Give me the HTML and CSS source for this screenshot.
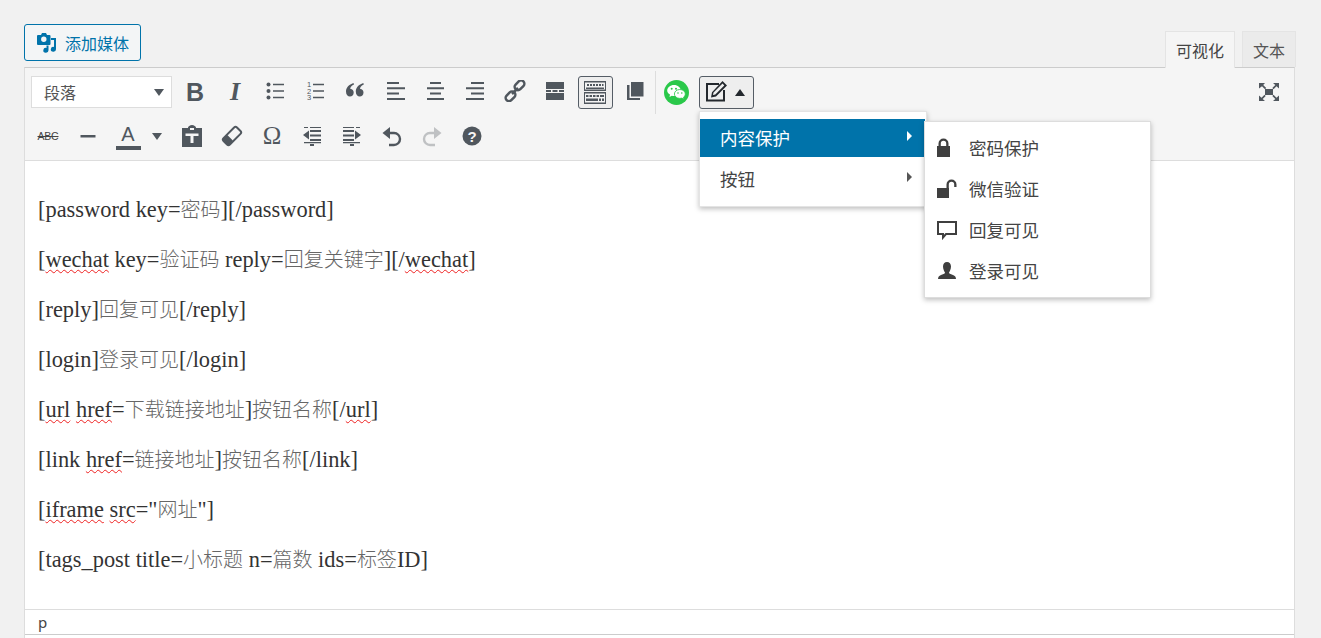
FILE: index.html
```html
<!DOCTYPE html>
<html lang="zh-CN">
<head>
<meta charset="utf-8">
<title>编辑器</title>
<link rel="stylesheet" href="styles.css">
</head>
<body>
<div class="page">
  <div class="top">
    <button class="media">
      <svg class="ic" width="20" height="20" viewBox="0 0 20 20"><path fill="#0073aa" fill-rule="evenodd" d="M1 2h3l1-2h4l1 2h2.500a1 1 0 0 1 1 1v8a1 1 0 0 1-1 1H1a1 1 0 0 1-1-1V3a1 1 0 0 1 1-1zm5.800 1.500a2.700 2.700 0 1 0 0 5.400 2.700 2.700 0 0 0 0-5.400z"/><path fill="#0073aa" d="M14 5h5v11.200a2.600 2.400 0 1 1-2-2.300V7h-3zM11.500 12.500v4.700a2.600 2.400 0 1 1-2-2.300v-2.400z"/></svg>
      <span>添加媒体</span>
    </button>
    <div class="tabs"><div class="tab on">可视化</div><div class="tab">文本</div></div>
  </div>
  <div class="editor">
    <div class="toolbar">
      <div class="row r1">
        <div class="select"><span>段落</span><i class="caret"></i></div>
        <div class="btns">
          <div class="b"><span class="tb">B</span></div>
          <div class="b"><span class="ti">I</span></div>
          <div class="b"><svg width="20" height="20" viewBox="0 0 20 20"><circle class="f" cx="3.500" cy="3.500" r="2"/><circle class="f" cx="3.500" cy="10" r="2"/><circle class="f" cx="3.500" cy="16.500" r="2"/><path class="f" d="M8 2.700h11v1.600H8zM8 9.200h11v1.600H8zM8 15.700h11v1.600H8z"/></svg></div>
          <div class="b"><svg width="20" height="20" viewBox="0 0 20 20"><path class="f" d="M8 2.700h11v1.600H8zM8 9.200h11v1.600H8zM8 15.700h11v1.600H8z"/><text class="num" x="4" y="6">1</text><text class="num" x="4" y="12.500">2</text><text class="num" x="4" y="19">3</text></svg></div>
          <div class="b"><svg width="22" height="20" viewBox="0 0 20 20"><path class="f" d="M9 3.500C6 4.800 5.300 6.500 5.300 8 7 7.800 8.700 9 8.700 11.500S7 15.500 5 15.500C2.800 15.500 1 14 1 10.500 1 6.500 4 3.500 8.500 2zM18.800 3.500c-3 1.300-3.700 3-3.700 4.500 1.700-.2 3.400 1 3.400 3.500s-1.700 4-3.700 4c-2.200 0-4-1.500-4-5 0-4 3-7 7.500-8.500z"/></svg></div>
          <div class="b"><svg width="20" height="20" viewBox="0 0 20 20"><path class="f" d="M2 1h12v2H2zM2 6.300h18v2H2zM2 11.600h12v2H2zM2 17h18v2H2z"/></svg></div>
          <div class="b"><svg width="20" height="20" viewBox="0 0 20 20"><path class="f" d="M5 1h11v2H5zM2 6.300h17v2H2zM5 11.600h11v2H5zM2 17h17v2H2z"/></svg></div>
          <div class="b"><svg width="20" height="20" viewBox="0 0 20 20"><path class="f" d="M6 1h13v2H6zM1 6.300h18v2H1zM6 11.600h13v2H6zM1 17h18v2H1z"/></svg></div>
          <div class="b"><svg width="22" height="22" viewBox="0 0 22 22"><g fill="none" stroke="#50575e" stroke-width="2.500"><rect x="10" y="2" width="11" height="6.600" rx="3.300" transform="rotate(-45 15.500 5.300)"/><rect x="1" y="13" width="11" height="6.600" rx="3.300" transform="rotate(-45 6.500 16.300)"/><path d="M8 14l6-6"/></g></svg></div>
          <div class="b"><svg width="20" height="20" viewBox="0 0 20 20"><path class="f" d="M1 1h18v7H1zM1 9h5v2H1zM7.500 9h5v2h-5zM14 9h5v2h-5zM1 12h18v7H1z"/></svg></div>
          <div class="b act"><svg width="24" height="23" viewBox="0 0 24 23"><path fill="#50575e" d="M1 0h22v10H1zM1 11h22v12H1z"/><path fill="#f3f3f3" d="M2 1.500h20v7H2zM2 12.500h20v9H2z"/><path fill="#50575e" d="M4 3h2v2H4zM7 3h2v2H7zM10 3h2v2h-2zM13 3h2v2h-2zM16 3h2v2h-2zM19 3h1.500v2H19zM3 6.500h18V8H3zM3 14h2.500v2H3zM6.500 14h2.500v2H6.500zM10 14h2.500v2H10zM13.500 14h2.500v2h-2.500zM17 14h4v2h-4zM3 17.500h12V20H3zM16 17.500h2V20h-2zM19 17.500h2V20h-2z"/></svg></div>
          <div class="b"><svg width="20" height="20" viewBox="0 0 20 20"><path class="f" d="M6 1h12.500v14.500H6z"/><path class="f" d="M2 4h2.500v13H15v2H2z"/></svg></div>
        </div>
        <div class="sep"></div>
        <div class="wechat"><svg width="25" height="25" viewBox="0 0 25 25"><circle cx="12.500" cy="12.500" r="12.500" fill="#2ac84a"/><path fill="#fff" d="M10 5c3.800 0 6.800 2.500 6.800 5.500S13.800 16 10 16c-.8 0-1.500-.1-2.200-.3L5.500 17l.5-2.400C4.200 13.500 3.200 12.100 3.200 10.500 3.200 7.500 6.200 5 10 5z"/><path fill="#fff" stroke="#2ac84a" stroke-width=".8" d="M15.800 9.500c3.200 0 5.500 2 5.500 4.500 0 1.300-.7 2.400-1.800 3.300l.4 1.900-1.900-1.100c-.7.2-1.400.3-2.200.3-3 0-5.400-2-5.400-4.400 0-2.500 2.400-4.500 5.400-4.500z"/><circle cx="7.700" cy="8.800" r="1" fill="#2ac84a"/><circle cx="12" cy="8.800" r="1" fill="#2ac84a"/><circle cx="14" cy="13" r=".8" fill="#2ac84a"/><circle cx="17.800" cy="13" r=".8" fill="#2ac84a"/></svg></div>
        <div class="drop">
          <svg width="21" height="21" viewBox="0 0 21 21"><path fill="none" stroke="#23282d" stroke-width="2" d="M13 3H1v16.500h17V9"/><path fill="#23282d" fill-rule="evenodd" d="M16.500 0L21 4.500 10 15.500l-5 1 1-5.300zM16.500 2.500l-9 9-.5 2.500 2.300-.5 9-9z"/></svg>
          <i class="up"></i>
        </div>
        <div class="full"><svg width="22" height="20" viewBox="0 0 22 20"><path class="f" d="M7 7h8v6H7zM1 1h6L5.200 3l3 3L7 7.300l-3-3L1 6.500zM21 1v5.500l-2.500-2.200-3 3L14.300 6l3-3L15 1zM1 19v-5.500l2.500 2.200 3-3L7.700 14l-3 3L7 19zM21 19h-6l2.300-2-3-3 1.200-1.300 3 3 2.500-2.200z"/></svg></div>
      </div>
      <div class="row r2">
        <div class="b"><span class="abc">ABC</span></div>
        <div class="b"><svg width="20" height="20" viewBox="0 0 20 20"><path class="f" d="M2.500 9h15v2.500h-15z"/></svg></div>
        <div class="color">
          <div class="b"><span class="fa">A</span></div>
          <i class="caret"></i>
        </div>
        <div class="b"><svg width="22" height="22" viewBox="0 0 22 22"><path class="f" fill-rule="evenodd" d="M1 3h6V2.500C7 1.500 9 0 11 0s4 1.500 4 2.500V3h6v19H1zM9 3v2h4V3zM4.500 8.500V11H9.500v7h3v-7h5V8.500z"/></svg></div>
        <div class="b"><svg width="22" height="22" viewBox="0 0 22 22"><g transform="rotate(-45 11 11)"><rect class="f" x="1.500" y="6.500" width="7" height="9" rx="1.500"/><rect fill="none" stroke="#50575e" stroke-width="2" x="1.500" y="6.500" width="19" height="9" rx="2"/></g></svg></div>
        <div class="b"><span class="om">Ω</span></div>
        <div class="b"><svg width="20" height="20" viewBox="0 0 20 20"><path class="f" d="M2 1h4v1H2zM8 1h11v1H8zM8 4h11v2H8zM8 8.500h11v2H8zM8 13h11v2H8zM2 16h17v1.200H2zM8 18h4v2H8zM7 4.500v9L1 9z"/></svg></div>
        <div class="b"><svg width="20" height="20" viewBox="0 0 20 20"><path class="f" d="M1 1h11v1H1zM14 1h4v1h-4zM1 4h11v2H1zM1 8.500h11v2H1zM1 13h11v2H1zM1 16h17v1.200H1zM8 18h4v2H8zM13 4.500v9l6-4.500z"/></svg></div>
        <div class="b"><svg width="22" height="22" viewBox="0 0 22 22"><path fill="none" stroke="#50575e" stroke-width="2.400" d="M4 8h9a6 6 0 0 1 0 12H8"/><path class="f" d="M9 2v12L1.500 8z"/></svg></div>
        <div class="b"><svg width="22" height="22" viewBox="0 0 22 22"><path fill="none" stroke="#bfc1c3" stroke-width="2.400" d="M18 8H9a6 6 0 0 0 0 12h5"/><path fill="#bfc1c3" d="M13 2v12l7.500-6z"/></svg></div>
        <div class="b"><svg width="20" height="20" viewBox="0 0 20 20"><circle class="f" cx="10" cy="10" r="9.500"/><text class="q" x="10" y="15.500">?</text></svg></div>
      </div>
    </div>
    <div class="content">
      <p>[password key=<span class="cn">密码</span>][/password]</p>
      <p>[<span class="sp">wechat</span> key=<span class="cn">验证码</span> reply=<span class="cn">回复关键字</span>][/<span class="sp">wechat</span>]</p>
      <p>[reply]<span class="cn">回复可见</span>[/reply]</p>
      <p>[login]<span class="cn">登录可见</span>[/login]</p>
      <p>[<span class="sp">url</span> <span class="sp">href</span>=<span class="cn">下载链接地址</span>]<span class="cn">按钮名称</span>[/<span class="sp">url</span>]</p>
      <p>[link <span class="sp">href</span>=<span class="cn">链接地址</span>]<span class="cn">按钮名称</span>[/link]</p>
      <p>[<span class="sp">iframe</span> <span class="sp">src</span>="<span class="cn">网址</span>"]</p>
      <p>[tags_post title=<span class="cn">小标题</span> n=<span class="cn">篇数</span> ids=<span class="cn">标签</span>ID]</p>
    </div>
    <div class="status">p</div>
  </div>
  <div class="menu">
    <div class="mi hot"><span>内容保护</span><i class="arr"></i></div>
    <div class="mi"><span>按钮</span><i class="arr"></i></div>
  </div>
  <div class="sub">
    <div class="si"><svg width="20" height="20" viewBox="0 0 20 20"><path fill="#3f3f3f" fill-rule="evenodd" d="M0 8h1.500V5.500a5 5 0 0 1 10 0V8H13v11H0zM3.800 8h5.400V5.500a2.700 2.700 0 0 0-5.400 0z"/></svg><span>密码保护</span></div>
    <div class="si"><svg width="20" height="20" viewBox="0 0 20 20"><path fill="#3f3f3f" d="M0 9h12v10H0zM9.500 9V5.500a5 5 0 0 1 10 0V8h-2.300V5.500a2.700 2.700 0 0 0-5.400 0V9z"/></svg><span>微信验证</span></div>
    <div class="si"><svg width="20" height="20" viewBox="0 0 20 20"><path fill="none" stroke="#3f3f3f" stroke-width="2" d="M1 2h18v12H9l-3 3.500V14H1z"/></svg><span>回复可见</span></div>
    <div class="si"><svg width="20" height="20" viewBox="0 0 20 20"><path fill="#3f3f3f" d="M10 1c2.500 0 4 2 4 4.500S12.500 11 12 11.500c0 1 1 1.500 4 2.500 2 .7 3 2 3 4H1c0-2 1-3.300 3-4 3-1 4-1.500 4-2.500C7.500 11 6 8 6 5.500S7.500 1 10 1z"/></svg><span>登录可见</span></div>
  </div>
</div>
</body>
</html>
```
FILE: styles.css
```css
* { box-sizing: border-box; }
html, body { margin: 0; padding: 0; height: 638px; overflow: hidden; }
body { background: #f1f1f1; color: #444; font-family: "Noto Sans CJK SC", "Liberation Sans", sans-serif; }
.page { position: relative; width: 1321px; height: 638px; overflow: hidden; }
.top { display: flex; justify-content: space-between; align-items: flex-end; height: 68px; padding: 0 25px 0 24px; }
.media { align-self: flex-start; margin-top: 24px; width: 117px; height: 37px; display: flex; align-items: center; gap: 8px; padding: 0 0 0 12px; border: 1px solid #0073aa; border-radius: 3px; background: #f3f5f6; color: #0073aa; font: 16px "Noto Sans CJK SC", sans-serif; }
.ic { flex: none; }
.tabs { display: flex; align-items: flex-end; gap: 7px; }
.tab { width: 54px; height: 36px; margin-bottom: 1px; text-align: center; line-height: 36px; font-size: 16px; color: #555; background: #ebebeb; border: 1px solid #e4e4e4; border-bottom: 0; }
.tab.on { width: 70px; height: 37px; margin-bottom: 0; background: #f5f5f5; color: #444; position: relative; z-index: 1; }
.editor { width: 1271px; margin: -1px 0 0 24px; border: 1px solid #ddd; border-top-color: #ccc; height: 580px; background: #fff; }
.toolbar { height: 93px; background: #f5f5f5; border-bottom: 1px solid #ddd; padding-top: 8px; }
.row { display: flex; align-items: center; }
.r1 { height: 32px; padding-left: 6px; position: relative; }
.r2 { margin-top: 12px; padding-left: 8px; gap: 10px; height: 32px; }
.select { width: 141px; height: 32px; background: #fff; border: 1px solid #ddd; display: flex; align-items: center; justify-content: space-between; padding: 0 7px 0 12px; font-size: 16px; color: #555; }
.caret { display: block; width: 0; height: 0; border-left: 5.500px solid transparent; border-right: 5.500px solid transparent; border-top: 7px solid #50575e; }
.btns { display: flex; gap: 10px; margin-left: 8px; }
.b { width: 30px; height: 30px; display: flex; align-items: center; justify-content: center; flex: none; color: #50575e; }
.r1 .b svg { margin-top: 1px; }
.f { fill: #50575e; }
.num { font: 7.500px "Liberation Sans", sans-serif; fill: #50575e; text-anchor: middle; }
.act { width: 35px; height: 33px; margin: 0 -2.500px; background: #eee; border: 1px solid #555d66; border-radius: 3px; }
.r1 .act svg { margin-top: 0; }
.tb { font: bold 25px/30px "Liberation Sans", sans-serif; margin-top: 3px; }
.ti { font: italic bold 26px/30px "Liberation Serif", serif; margin-top: 3px; }
.abc { font: 10.500px "Liberation Sans", sans-serif; text-decoration: line-through; letter-spacing: -.2px; color: #444; }
.om { font: 25px "Liberation Serif", serif; }
.fa { font: 20px "Liberation Sans", sans-serif; width: 25px; text-align: center; line-height: 23px; border-bottom: 4px solid #50575e; }
.color { display: flex; align-items: center; gap: 9px; padding-right: 5px; }
.q { font: bold 15px "Liberation Sans", sans-serif; fill: #f5f5f5; text-anchor: middle; }
.sep { width: 1px; height: 43px; background: #ddd; margin: -5px 0 0 5px; align-self: flex-start; }
.wechat { margin-left: 8px; height: 25px; }
.drop { margin-left: 10px; width: 55px; height: 33px; display: flex; align-items: center; gap: 8px; padding-left: 6px; background: #eee; border: 1px solid #555d66; border-radius: 3px; }
.drop svg { margin-top: -2px; }
.up { display: block; width: 0; height: 0; border-left: 5px solid transparent; border-right: 5px solid transparent; border-bottom: 7px solid #23282d; }
.full { margin-left: auto; margin-right: 14px; height: 20px; }
.content { height: 448px; padding: 34px 13px 0; font: 22.400px/30px "Liberation Serif", "Noto Sans CJK SC", serif; color: #333; background: #fff; }
.content p { height: 30px; margin: 0 0 20px; }
.cn { font: 300 20px/20px "Noto Sans CJK SC", serif; color: #666; }
.sp { text-decoration: underline wavy #e22; text-decoration-thickness: 1px; text-underline-offset: 2px; }
.status { height: 26px; border-top: 1px solid #ddd; border-bottom: 1px solid #ccc; padding-left: 13px; font: 15px/24px "Noto Sans", sans-serif; color: #444; background: #fff; }
.menu { position: absolute; left: 699px; top: 111px; width: 228px; height: 96px; padding: 7px 1px 0 0; background: #fff; border: 1px solid #e4e4e4; box-shadow: 0 2px 5px rgba(0,0,0,.25); font-size: 17.500px; color: #444; }
.mi { height: 38px; margin-bottom: 3px; display: flex; align-items: center; justify-content: space-between; padding: 0 13px 0 20px; }
.mi span { margin-top: -2px; }
.mi.hot { background: #0073aa; color: #fff; }
.arr { display: block; width: 0; height: 0; border-top: 5px solid transparent; border-bottom: 5px solid transparent; border-left: 5px solid #555; margin-top: -4px; }
.hot .arr { border-left-color: #fff; }
.sub { position: absolute; left: 924px; top: 121px; width: 227px; height: 177px; padding: 5px 0 0 12px; background: #fff; border: 1px solid #ddd; box-shadow: 0 2px 5px rgba(0,0,0,.25); font-size: 17.500px; color: #444; }
.si { height: 41px; display: flex; align-items: center; }
.si span { margin-top: -1px; }
.si svg { width: 20px; flex: none; margin-right: 12px; }
```
